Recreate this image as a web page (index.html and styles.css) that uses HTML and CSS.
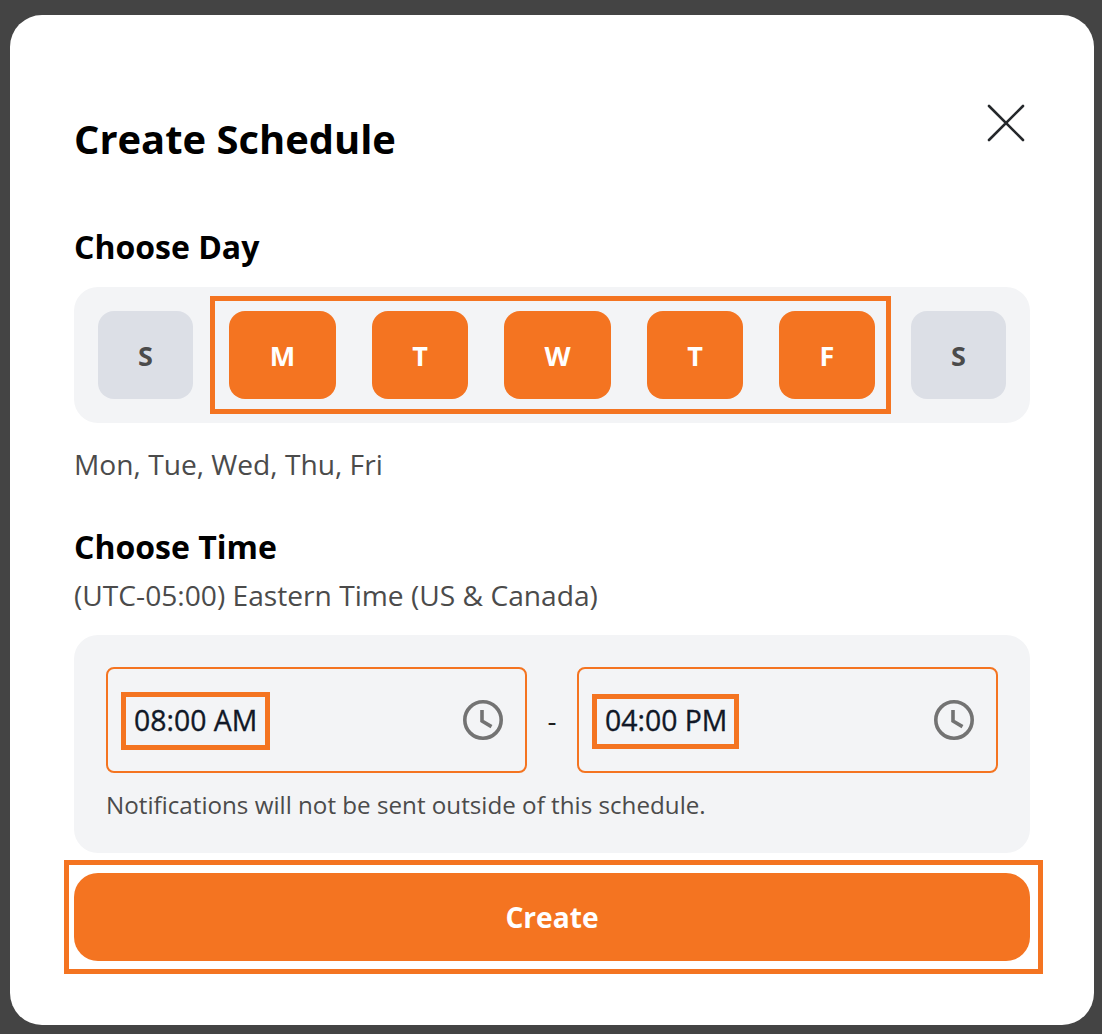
FILE: index.html
```html
<!DOCTYPE html>
<html lang="en">
<head>
<meta charset="utf-8">
<title>Create Schedule</title>
<link rel="stylesheet" href="styles.css">
</head>
<body>
<main class="modal">
  <header class="modal-head">
    <h1 class="title">Create Schedule</h1>
    <button class="close" aria-label="Close">
      <svg width="38" height="38" viewBox="0 0 38 38" fill="none" stroke="#25282b" stroke-width="2.6" stroke-linecap="round"><path d="M2 2 36 36M36 2 2 36"/></svg>
    </button>
  </header>

  <h2 class="section-title day-title">Choose Day</h2>
  <div class="day-panel">
    <div class="day off">S</div>
    <div class="day on wide">M</div>
    <div class="day on">T</div>
    <div class="day on wide">W</div>
    <div class="day on">T</div>
    <div class="day on">F</div>
    <div class="day off">S</div>
    <span class="mark mark-days"></span>
  </div>
  <p class="summary">Mon, Tue, Wed, Thu, Fri</p>

  <h2 class="section-title time-title">Choose Time</h2>
  <p class="zone">(UTC-05:00) Eastern Time (US &amp; Canada)</p>
  <div class="time-panel">
    <div class="time-row">
      <div class="time-input">
        <span class="time-value">08:00 AM<span class="mark mark-start"></span></span>
        <svg class="clock" width="40" height="40" viewBox="0 0 40 40" fill="none" stroke="#737373" stroke-width="3.6"><circle cx="20" cy="20" r="18.2"/><path d="M19 10v11l9.5 5.6"/></svg>
      </div>
      <span class="dash">-</span>
      <div class="time-input">
        <span class="time-value">04:00 PM<span class="mark mark-end"></span></span>
        <svg class="clock" width="40" height="40" viewBox="0 0 40 40" fill="none" stroke="#737373" stroke-width="3.6"><circle cx="20" cy="20" r="18.2"/><path d="M19 10v11l9.5 5.6"/></svg>
      </div>
    </div>
    <p class="note">Notifications will not be sent outside of this schedule.</p>
  </div>

  <button class="create">Create<span class="mark mark-create"></span></button>
</main>
</body>
</html>
```

FILE: styles.css
```css
* { box-sizing: border-box; }
html, body { margin: 0; height: 100%; }
body {
  background: #444444;
  padding: 15px 8px 9px 10px;
  font-family: "Open Sans", sans-serif;
  overflow: hidden;
}
.modal {
  width: 1084px;
  height: 1010px;
  background: #fff;
  border-radius: 32px;
  padding: 0 64px;
  display: flex;
  flex-direction: column;
}
.modal-head {
  display: flex;
  justify-content: space-between;
  align-items: flex-start;
  height: 208px;
  flex: none;
}
.title {
  margin: 98px 0 0 0;
  font-size: 39.9px;
  line-height: 52px;
  font-weight: 700;
  color: #000;
}
.close {
  margin: 89px 5px 0 0;
  padding: 0;
  border: 0;
  background: none;
  width: 38px;
  height: 38px;
  display: block;
}
.close svg { display: block; }
.section-title {
  margin: 0;
  font-size: 32px;
  line-height: 40px;
  font-weight: 700;
  color: #000;
}
.day-title { margin-top: 4px; }
.day-panel {
  position: relative;
  margin-top: 20px;
  height: 136px;
  background: #f3f4f6;
  border-radius: 24px;
  padding: 24px;
  display: flex;
  gap: 36px;
  flex: none;
}
.day {
  width: 96px;
  height: 88px;
  border-radius: 16px;
  display: flex;
  align-items: center;
  justify-content: center;
  font-size: 27px;
  font-weight: 700;
  padding-top: 1px;
}
.day.wide { width: 107px; }
.day.off { background: #dcdfe6; color: #4b4b4b; width: 95px; }
.day.on { background: #f47421; color: #fff; }
.mark {
  position: absolute;
  border: 5px solid #f47421;
  pointer-events: none;
}
.mark-days { left: 136px; top: 9px; width: 681px; height: 118px; }
.summary {
  margin: 21px 0 0;
  font-size: 28.16px;
  line-height: 40px;
  color: #4b4b4b;
}
.time-title { margin-top: 43px; }
.zone {
  margin: 8px 0 0;
  font-size: 28.16px;
  line-height: 40px;
  color: #4b4b4b;
}
.time-panel {
  margin-top: 20px;
  height: 218px;
  background: #f3f4f6;
  border-radius: 24px;
  padding: 32px;
  flex: none;
}
.time-row {
  display: flex;
  align-items: center;
  justify-content: space-between;
}
.time-input {
  width: 421px;
  height: 106px;
  border: 2px solid #f47421;
  border-radius: 8px;
  display: flex;
  align-items: center;
  justify-content: space-between;
  padding: 0 22px 0 26px;
}
.time-value {
  position: relative;
  font-size: 28.4px;
  line-height: 40px;
  font-weight: 400;
  color: #111827;
  -webkit-text-stroke: 0.35px #111827;
}
.mark-start { left: -13px; right: -13px; top: -8px; bottom: -10px; }
.mark-end { left: -13px; right: -12px; top: -6px; bottom: -9px; }
.clock { display: block; }
.dash { font-size: 28px; line-height: 40px; color: #1f1f1f; }
.note {
  margin: 16px 0 0;
  font-size: 24.2px;
  line-height: 32px;
  color: #4b4b4b;
}
.create {
  position: relative;
  margin-top: 20px;
  height: 88px;
  border: 0;
  border-radius: 24px;
  background: #f47421;
  color: #fff;
  font: 700 28.16px/40px "Open Sans", sans-serif;
  flex: none;
}
.mark-create { left: -10px; right: -13px; top: -13px; bottom: -13px; }
```
